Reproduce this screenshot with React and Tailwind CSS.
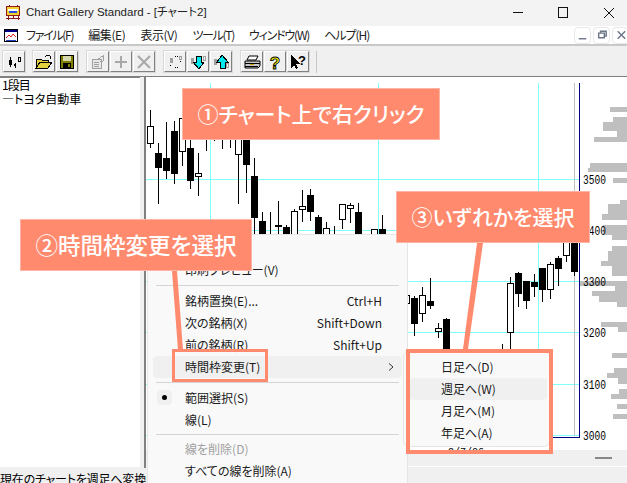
const candles = [
  // x, wickTop, wickBottom, bodyTop, bodyBottom, filled
  [150, 111, 149, 127, 145, false],
  [158, 144, 205, 154, 169, true],
  [166, 123, 180, 159, 172, true],
  [174, 122, 185, 132, 175, true],
  [182, 110, 167, 119, 153, false],
  [190, 125, 190, 149, 182, true],
  [198, 154, 197, 174, 178, false],
  [206, 120, 152, 120, 141, true],
  [214, 120, 142, 120, 141, true],
  [222, 120, 150, 120, 141, true],
  [230, 120, 149, 120, 141, true],
  [238, 120, 205, 120, 156, false],
  [246, 120, 194, 120, 166, true],
  [254, 159, 240, 177, 219, true],
  [262, 213, 240, 222, 240, true],
  [270, 213, 240, 240, 240, true],
  [278, 202, 240, 226, 228, true],
  [286, 226, 240, 228, 240, true],
  [294, 210, 240, 212, 245, false],
  [302, 191, 223, 207, 211, false],
  [310, 190, 222, 196, 213, true],
  [318, 216, 240, 218, 240, true],
  [326, 223, 240, 229, 245, false],
  [334, 227, 240, 240, 240, true],
  [342, 205, 230, 205, 221, false],
  [350, 204, 224, 206, 210, false],
  [358, 204, 240, 213, 240, true],
  [374, 230, 240, 230, 245, false],
  [382, 216, 240, 230, 240, true],
  [406, 290, 318, 296, 305, false],
  [414, 297, 337, 299, 325, true],
  [422, 288, 323, 296, 315, false],
  [430, 279, 310, 302, 307, true],
  [438, 324, 339, 329, 333, false],
  [446, 319, 370, 320, 370, true],
  [502, 345, 370, 370, 370, true],
  [510, 278, 370, 284, 334, false],
  [518, 273, 308, 274, 295, true],
  [526, 282, 310, 282, 302, true],
  [534, 275, 298, 283, 288, true],
  [542, 269, 303, 269, 291, true],
  [550, 263, 300, 265, 291, false],
  [558, 257, 287, 259, 270, true],
  [566, 235, 263, 235, 257, false],
  [574, 235, 277, 235, 273, true],
];

const histogram = [
  [610, 108, 113], [613, 118, 123], [603, 123, 132], [617, 132, 138], [594, 138, 143],
  [590, 164, 169], [588, 169, 173], [613, 179, 184], [620, 201, 205], [608, 205, 215],
  [602, 215, 221], [603, 226, 236], [612, 236, 241], [612, 247, 252], [608, 252, 262],
  [601, 262, 267], [612, 267, 277], [579, 282, 287], [615, 287, 292], [592, 292, 297],
  [599, 297, 303], [617, 303, 308], [601, 323, 328], [618, 328, 333], [612, 354, 359],
  [614, 369, 374], [607, 374, 379], [618, 379, 385], [619, 390, 395], [611, 395, 400],
  [617, 405, 410], [613, 415, 420],
];

const priceLabels = [["3500", 180], ["3400", 231], ["3300", 282], ["3200", 333], ["3100", 385], ["3000", 436]];

function Chart() {
  return (
    <svg width="481" height="373" viewBox="146 78 481 373" shapeRendering="crispEdges" className="block">
      {histogram.map(([x, y1, y2]) => (
        <rect key={y1} x={x} y={y1} width={627 - x} height={y2 - y1} fill="#bfbfbf" />
      ))}
      {[210, 378, 538].map((x) => (
        <rect key={x} x={x} y="84" width="1" height="353" fill="#7fffff" />
      ))}
      {[180, 231, 282, 333, 385, 436].map((y) => (
        <rect key={y} x="146" y={y} width="433" height="1" fill="#7fffff" />
      ))}
      <rect x="574" y="84" width="1" height="353" fill="#bfbfbf" />
      {candles.map(([x, wt, wb, bt, bb, filled]) => (
        <g key={x}>
          <rect x={x} y={wt} width="1" height={wb - wt} fill="#000" />
          {filled ? (
            <rect x={x - 3} y={bt} width="7" height={bb - bt} fill="#000" />
          ) : (
            <rect x={x - 2.5} y={bt + 0.5} width="6" height={bb - bt - 1} fill="#fff" stroke="#000" />
          )}
        </g>
      ))}
      <rect x="579" y="84" width="1" height="355" fill="#000080" />
      <rect x="470" y="438" width="110" height="1" fill="#000080" />
      {priceLabels.map(([label, y]) => (
        <text key={label} x="583" y={y + 5} fontSize="12" textLength="23" lengthAdjust="spacingAndGlyphs" fontFamily="Liberation Mono, monospace" fill="#000" shapeRendering="auto">
          {label}
        </text>
      ))}
      <text x="448" y="456" fontSize="10" fontFamily="Liberation Mono, monospace" fill="#000">2/7/06</text>
    </svg>
  );
}

function ToolButton({ children, className = "" }) {
  return (
    <div className={`w-[22px] h-[21px] flex items-center justify-center border border-t-white border-l-white border-r-[#808080] border-b-[#808080] bg-[#f0f0f0] shadow-[0_0_0_1px_#d8d8d8] ${className}`}>
      <svg width="18" height="16" viewBox="0 0 18 16" shapeRendering="crispEdges">{children}</svg>
    </div>
  );
}

function MenuRow({ label, shortcut, active, disabled, bullet, arrow }) {
  return (
    <div className={`relative h-[22px] flex items-center pl-[32px] pr-[20px] rounded ${active ? "bg-[#f0f0f0]" : ""} ${disabled ? "text-[#a0a0a0]" : "text-[#1a1a1a]"}`}>
      {bullet && (
        <span className="absolute left-[4px] top-[3px] w-[15px] h-[15px] rounded-sm bg-[#f0f0f0] flex items-center justify-center">
          <span className="w-[5px] h-[5px] rounded-full bg-black" />
        </span>
      )}
      <span className="flex-1">{label}</span>
      {shortcut && <span>{shortcut}</span>}
      {arrow && (
        <svg className="absolute right-[6px] top-[6px]" width="10" height="10" viewBox="0 0 10 10" fill="none" stroke="#333" strokeWidth="1">
          <path d="M3 1.5 L7 5 L3 8.5" />
        </svg>
      )}
    </div>
  );
}

function Separator() {
  return <div className="h-px bg-[#d4d4d4] mx-[3px]" />;
}

function Callout({ className, children }) {
  return (
    <div className={`absolute h-[52px] flex items-center justify-center bg-[#ff8a6e] border border-[#ffb5a5] text-white font-medium [font-feature-settings:'palt'] ${className}`}>
      {children}
    </div>
  );
}

export default function App() {
  return (
    <div className="relative w-[627px] h-[483px] overflow-hidden flex flex-col bg-[#f0f0f0] text-[12px] text-black font-['Noto_Sans_CJK_JP',sans-serif] [font-feature-settings:'palt']">
      {/* title bar */}
      <div className="h-[26px] shrink-0 flex items-center bg-[#f3f3f3] pl-[5px]">
        <svg width="16" height="16" viewBox="0 0 16 16" shapeRendering="crispEdges">
          <rect x="1.5" y="1.5" width="13" height="9" fill="#f0d030" stroke="#901818" />
          <rect x="3" y="4" width="10" height="2" fill="#fff" />
          <rect x="4" y="6" width="8" height="2" fill="#2850e0" />
          <path d="M4 1V0M12 1V0" stroke="#901818" />
          <path d="M3 11v4M8 11v3M13 11v4M1 13h14" stroke="#901818" />
        </svg>
        <span className="ml-[5px] text-[11.5px] text-[#222] font-['Liberation_Sans','Noto_Sans_CJK_JP',sans-serif]">Chart Gallery Standard - [チャート2]</span>
        <div className="ml-auto flex items-center">
          <svg width="114" height="12" viewBox="0 0 114 12" fill="none" stroke="#111" strokeWidth="1" shapeRendering="crispEdges">
            <path d="M0 5.5H10" />
            <rect x="45.5" y="0.5" width="9" height="10" rx="1" />
            <path d="M91 1L101 11M101 1L91 11" shapeRendering="auto" />
          </svg>
        </div>
      </div>

      {/* menu bar */}
      <div className="h-[20px] shrink-0 flex items-center bg-white border-b-2 border-[#c8c8c8] pl-[4px] text-[#222]">
        <svg width="14" height="13" viewBox="0 0 14 13" shapeRendering="crispEdges">
          <rect x="0.5" y="0.5" width="13" height="12" fill="#fff" stroke="#000" />
          <rect x="1" y="1" width="12" height="2" fill="#000080" />
          <path d="M2 9L5 6L7 8L9 5L12 8" fill="none" stroke="#e02020" shapeRendering="auto" />
          <path d="M2 11h10" stroke="#2040c0" />
        </svg>
        <div className="flex gap-[15px] ml-[8px]">
          <span className="tracking-[-1.3px]">ファイル(F)</span>
          <span className="tracking-[-0.4px]">編集(E)</span>
          <span className="tracking-[-0.4px]">表示(V)</span>
          <span className="tracking-[-1.3px]">ツール(T)</span>
          <span className="tracking-[-1.2px]">ウィンドウ(W)</span>
          <span className="tracking-[-1px]">ヘルプ(H)</span>
        </div>
        <div className="ml-auto flex gap-[2px] -mr-[2px]">
          {["M4 12h8", "M5 6h6v5H5zM7 6V4h6v5h-2", "M5 4l8 8M13 4l-8 8"].map((d) => (
            <div key={d} className="w-[17px] h-[17px] border border-[#e8e8e8] rounded-sm flex items-center justify-center">
              <svg width="16" height="16" viewBox="0 0 16 16" fill="none" stroke="#6b7688" strokeWidth="1.5">
                <path d={d} />
              </svg>
            </div>
          ))}
        </div>
      </div>

      {/* toolbar */}
      <div className="h-[31px] shrink-0 flex items-start pt-[5px] pl-[3px] bg-[#f0f0f0] border-b border-[#808080]">
        <ToolButton>
          <path d="M4 6h3v5H4zM5 3h1v10H5z" fill="#000" />
          <path d="M9 10h2v2H9zM10 9h1v5h-1z" fill="#000" />
          <rect x="13.5" y="3.5" width="2" height="4" fill="none" stroke="#000" />
        </ToolButton>
        <ToolButton className="ml-[8px]">
          <path d="M1 14V5h5l1 1h6v2H5L1 14h12l4-6H5" fill="#e0d040" stroke="#000" />
          <path d="M10 3l2-2 3 1v3" fill="none" stroke="#000" />
        </ToolButton>
        <ToolButton className="ml-[1px]">
          <rect x="2.5" y="1.5" width="13" height="13" fill="#808000" stroke="#000" />
          <rect x="5" y="2" width="8" height="5" fill="#d8d8b0" />
          <rect x="5" y="9" width="8" height="5" fill="#000" />
          <rect x="10" y="10" width="2" height="3" fill="#808000" />
        </ToolButton>
        <ToolButton className="ml-[9px]">
          <path d="M3 5h9v9H3z" fill="#e8e8e8" stroke="#a0a0a0" />
          <path d="M5 8h5M5 10h5M5 12h5" stroke="#a0a0a0" />
          <path d="M9 5l5-3v5l-3 1" fill="none" stroke="#a0a0a0" />
        </ToolButton>
        <ToolButton className="ml-[1px]">
          <path d="M3 8h12M9 2v12" stroke="#a8a8a8" strokeWidth="2" />
        </ToolButton>
        <ToolButton className="ml-[1px]">
          <path d="M3 2l12 12M15 2L3 14" stroke="#a8a8a8" strokeWidth="2" shapeRendering="auto" />
        </ToolButton>
        <ToolButton className="ml-[9px]">
          <path d="M4 4h3v5H4z" fill="#a0a0a0" />
          <path d="M9 2h3M14 5v3M12 13H8M4 11v2" stroke="#000" strokeDasharray="1 1" />
          <rect x="13.5" y="2.5" width="2" height="3" fill="none" stroke="#a0a0a0" />
        </ToolButton>
        <ToolButton className="ml-[1px]">
          <path d="M2 4h3v6H2z" fill="#a0a0a0" />
          <rect x="14.5" y="2.5" width="2" height="4" fill="none" stroke="#a0a0a0" />
          <path d="M7 2h5v6h3l-5 7-6-7h3z" fill="#00e8f0" stroke="#000" />
        </ToolButton>
        <ToolButton className="ml-[1px]">
          <path d="M2 5h3v6H2z" fill="#a0a0a0" />
          <rect x="14.5" y="9.5" width="2" height="4" fill="none" stroke="#a0a0a0" />
          <path d="M10 1l6 7h-3v6H8V8H5z" fill="#00e8f0" stroke="#000" />
        </ToolButton>
        <ToolButton className="ml-[9px]">
          <path d="M6 2h9l-2 4H4z" fill="#fff" stroke="#000" shapeRendering="auto" />
          <path d="M2 7h15v5l-2 2H2z" fill="#c8c8c8" stroke="#000" shapeRendering="auto" />
          <path d="M2 9h15M2 12h13" stroke="#000" />
          <path d="M7 10h4" stroke="#c8a000" />
        </ToolButton>
        <ToolButton className="ml-[1px]">
          <text x="9" y="14.5" textAnchor="middle" fontSize="17" fontWeight="700" fontFamily="Liberation Sans, sans-serif" fill="#ffff00" stroke="#000" strokeWidth="0.9" shapeRendering="auto">?</text>
        </ToolButton>
        <ToolButton className="ml-[1px]">
          <path d="M2 1v13l3-3 2 4 2-1-2-4h4z" fill="#000" />
          <text x="9" y="11" fontSize="13" fontWeight="700" fontFamily="Liberation Sans, sans-serif" fill="#000" shapeRendering="auto">?</text>
        </ToolButton>
        <div className="ml-[7px] w-px h-[22px] bg-[#c8c8c8]" />
      </div>

      {/* workspace */}
      <div className="flex shrink-0 h-[391px]">
        <div className="w-[144px] shrink-0 pr-[4px]">
          <div className="h-[390px] bg-white border-t border-[#808080] pl-[2px] text-[12px] leading-[14px] text-black">
            <div className="tracking-[-1px]">1段目</div>
            <div>―トヨタ自動車</div>
          </div>
        </div>
        <div className="flex-1 flex flex-col border-l-2 border-[#808080]">
          <div className="h-[373px] bg-white overflow-hidden">
            <Chart />
          </div>
          <div className="relative h-[17px] bg-[#f0f0f0] border-b border-white">
            <div className="absolute right-[15px] top-[7px] w-[17px] h-[2px] bg-[#888]" />
          </div>
        </div>
      </div>

      {/* status bar */}
      <div className="h-[15px] overflow-hidden pt-[3px] leading-[15px] whitespace-nowrap tracking-[-0.2px]">現在のチャートを週足へ変換</div>

      {/* context menu */}
      <div className="absolute left-[147px] top-[234px] w-[261px] h-[260px] bg-[#f9f9f9] border border-[#e5e5e5] rounded-md px-[5px] pt-[2px] text-[12px]">
        <MenuRow label="印刷(P)" />
        <MenuRow label="印刷プレビュー(V)" />
        <div className="h-[9px] flex items-center"><div className="flex-1"><Separator /></div></div>
        <MenuRow label="銘柄置換(E)..." shortcut="Ctrl+H" />
        <MenuRow label="次の銘柄(X)" shortcut="Shift+Down" />
        <MenuRow label="前の銘柄(R)" shortcut="Shift+Up" />
        <MenuRow label="時間枠変更(T)" active arrow />
        <div className="h-[9px] flex items-center"><div className="flex-1"><Separator /></div></div>
        <MenuRow label="範囲選択(S)" bullet />
        <MenuRow label="線(L)" />
        <div className="h-[7px] flex items-center"><div className="flex-1"><Separator /></div></div>
        <MenuRow label="線を削除(D)" disabled />
        <MenuRow label="すべての線を削除(A)" />
      </div>

      {/* submenu */}
      <div className="absolute left-[403px] top-[351px] w-[147px] h-[96px] bg-[#f9f9f9] border border-[#e5e5e5] rounded-md pt-[4px] pl-[6px] pr-[2px] text-[12px]">
        {["日足へ(D)", "週足へ(W)", "月足へ(M)", "年足へ(A)"].map((label) => (
          <div key={label} className={`h-[22px] flex items-center pl-[31px] rounded text-[#1a1a1a] ${label.startsWith("週") ? "bg-[#f0f0f0]" : ""}`}>
            {label}
          </div>
        ))}
      </div>

      {/* annotations */}
      <svg className="absolute left-0 top-0 pointer-events-none" width="627" height="483" viewBox="0 0 627 483">
        <path d="M172 271H177L183 350H178Z" fill="#ff8a6e" />
        <path d="M477 243H483L468 349H463Z" fill="#ff8a6e" />
      </svg>
      <div className="absolute left-[172px] top-[349px] w-[96px] h-[33px] border-[3px] border-[#ff8a6e]" />
      <div className="absolute left-[406px] top-[349px] w-[147px] h-[105px] border-4 border-[#ff8a6e]" />
      <Callout className="left-[182px] top-[88px] w-[258px] text-[21px]">①チャート上で右クリック</Callout>
      <Callout className="left-[20px] top-[219px] w-[232px] text-[22.5px]">②時間枠変更を選択</Callout>
      <Callout className="left-[396px] top-[191px] w-[194px] text-[21px]">③いずれかを選択</Callout>
    </div>
  );
}
